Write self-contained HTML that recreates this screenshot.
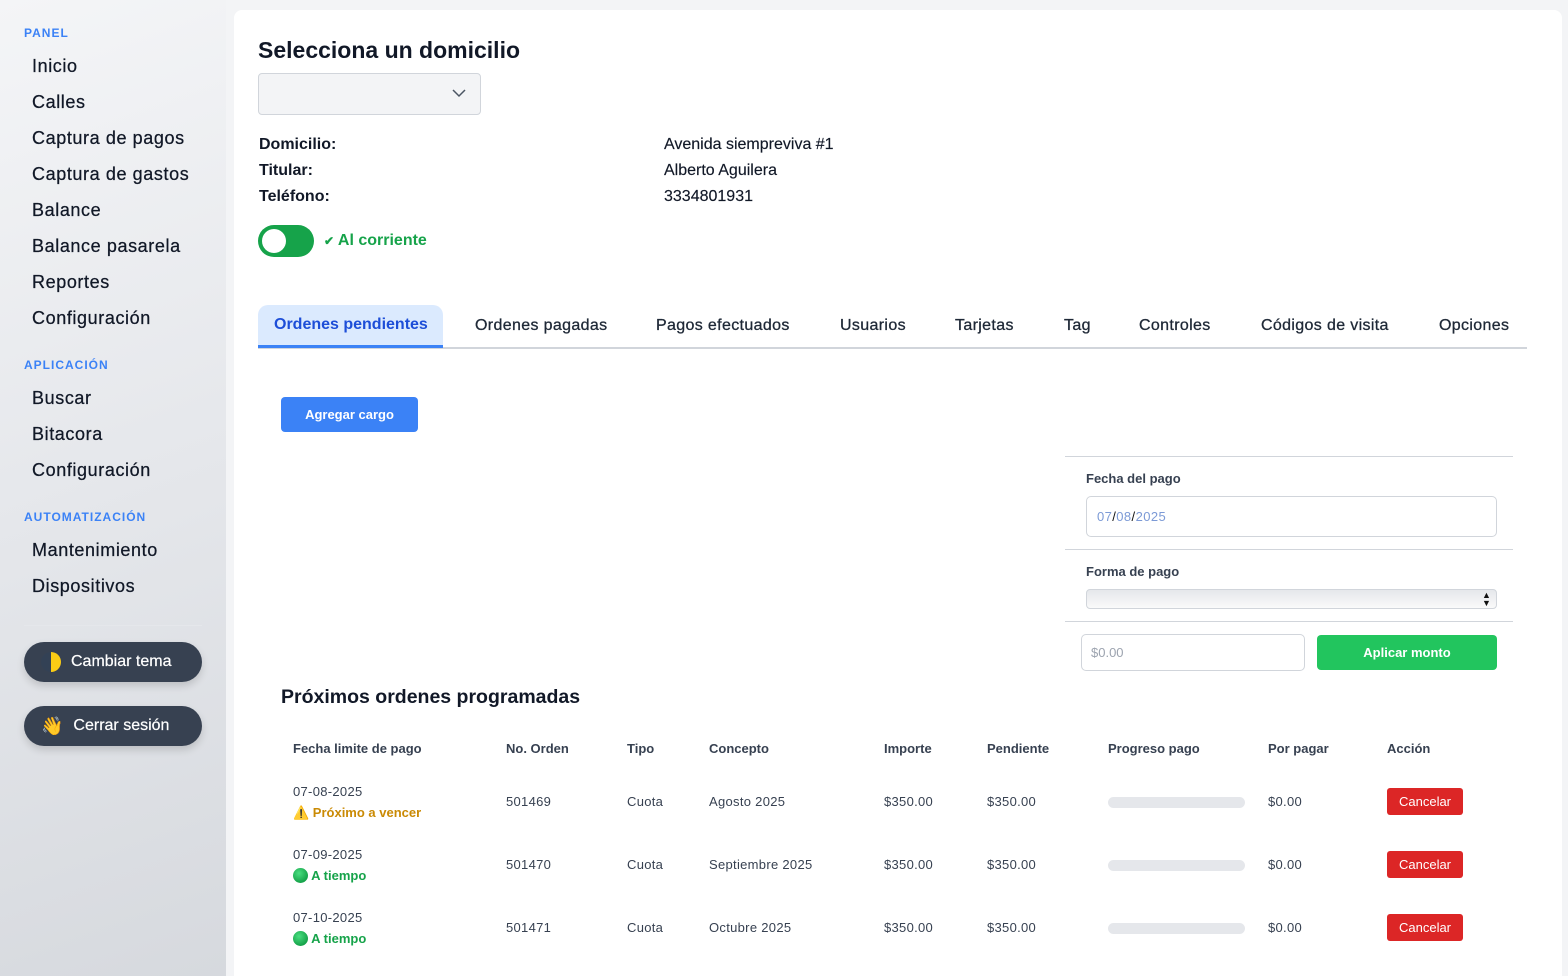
<!DOCTYPE html>
<html><head><meta charset="utf-8"><style>
*{box-sizing:border-box;margin:0;padding:0}
html,body{width:1568px;height:976px;overflow:hidden}
body{background:#f3f4f6;font-family:"Liberation Sans","Noto Sans CJK JP",sans-serif;color:#111827;position:relative}
.a{position:absolute;white-space:nowrap}
#side{position:absolute;left:0;top:0;width:226px;height:976px;background:linear-gradient(160deg,#f4f5f7 0%,#e5e7eb 50%,#d6d9de 100%)}
.sec{font-size:12px;color:#3b82f6;letter-spacing:1px;left:24px;font-weight:600}
.nav{font-size:18px;color:#111827;left:32px;letter-spacing:0.6px;-webkit-text-stroke:0.25px #111827}
.pill{position:absolute;left:24px;width:178px;height:40px;border-radius:20px;background:#374151;color:#fff;font-size:16px;box-shadow:0 4px 8px rgba(0,0,0,.15);display:flex;align-items:center;padding-left:17px;gap:10px;-webkit-text-stroke:0.2px #fff}
#main{position:absolute;left:234px;top:10px;width:1328px;height:966px;background:#fff;border-radius:8px 8px 0 0}
.lbl{font-size:16px;font-weight:bold;left:259px}
.val{font-size:16px;left:664px;-webkit-text-stroke:0.15px #111827}
.tab{font-size:16px;color:#1f2937;top:317px;letter-spacing:0.35px;-webkit-text-stroke:0.3px #1f2937}
.th{font-size:13px;font-weight:bold;color:#374151;top:741px}
.td{font-size:13px;color:#374151;letter-spacing:0.3px}
.bar{position:absolute;left:1108px;width:137px;height:11px;border-radius:6px;background:#e5e7eb}
.btn{position:absolute;left:1387px;width:76px;height:27px;background:#dc2626;color:#fff;border-radius:3px;font-size:13px;text-align:center;line-height:27px}
.hr{position:absolute;left:1065px;width:448px;height:1px;background:#d1d5db}
</style></head><body>
<div id="side">
<div class="a sec" style="top:26px">PANEL</div>
<div class="a nav" style="top:56px">Inicio</div>
<div class="a nav" style="top:92px">Calles</div>
<div class="a nav" style="top:128px">Captura de pagos</div>
<div class="a nav" style="top:164px">Captura de gastos</div>
<div class="a nav" style="top:200px">Balance</div>
<div class="a nav" style="top:236px">Balance pasarela</div>
<div class="a nav" style="top:272px">Reportes</div>
<div class="a nav" style="top:308px">Configuración</div>
<div class="a sec" style="top:358px">APLICACIÓN</div>
<div class="a nav" style="top:388px">Buscar</div>
<div class="a nav" style="top:424px">Bitacora</div>
<div class="a nav" style="top:460px">Configuración</div>
<div class="a sec" style="top:510px">AUTOMATIZACIÓN</div>
<div class="a nav" style="top:540px">Mantenimiento</div>
<div class="a nav" style="top:576px">Dispositivos</div>
<div class="a" style="left:24px;top:625px;width:178px;height:1px;background:#e5e7eb"></div>
<div class="pill" style="top:642px"><span style="width:20px;height:20px;border-radius:50%;background:linear-gradient(90deg,#334155 50%,#facc15 50%);display:inline-block"></span>Cambiar tema</div>
<div class="pill" style="top:706px"><span style="font-size:18px">👋</span>Cerrar sesión</div>
</div>
<div id="main"></div>
<div class="a" style="left:258px;top:37px;font-size:23px;font-weight:bold">Selecciona un domicilio</div>
<div class="a" style="left:258px;top:73px;width:223px;height:42px;border:1px solid #d1d5db;border-radius:4px;background:#f3f4f6"></div>
<svg class="a" style="left:451px;top:88px" width="16" height="10"><path d="M2 2l6 6 6-6" fill="none" stroke="#4b5563" stroke-width="1.5"/></svg>
<div class="a lbl" style="top:136px">Domicilio:</div>
<div class="a lbl" style="top:162px">Titular:</div>
<div class="a lbl" style="top:188px">Teléfono:</div>
<div class="a val" style="top:136px">Avenida siempreviva #1</div>
<div class="a val" style="top:162px">Alberto Aguilera</div>
<div class="a val" style="top:188px">3334801931</div>
<div class="a" style="left:258px;top:225px;width:56px;height:32px;border-radius:16px;background:#16a34a"></div>
<div class="a" style="left:262px;top:229px;width:24px;height:24px;border-radius:50%;background:#fff"></div>
<div class="a" style="left:324px;top:232px;font-size:16px;font-weight:bold;color:#16a34a"><span style="font-size:12px">✔</span> Al corriente</div>
<div class="a" style="left:258px;top:305px;width:185px;height:43px;background:#dbeafe;border-radius:10px 10px 0 0"></div>
<div class="a" style="left:258px;top:347px;width:1269px;height:2px;background:#d1d5db"></div>
<div class="a" style="left:258px;top:345px;width:185px;height:3px;background:#3b82f6"></div>
<div class="a tab" style="left:274px;top:316px;color:#1d4ed8;font-weight:600;letter-spacing:0;-webkit-text-stroke:0">Ordenes pendientes</div>
<div class="a tab" style="left:475px">Ordenes pagadas</div>
<div class="a tab" style="left:656px">Pagos efectuados</div>
<div class="a tab" style="left:840px">Usuarios</div>
<div class="a tab" style="left:955px">Tarjetas</div>
<div class="a tab" style="left:1064px">Tag</div>
<div class="a tab" style="left:1139px">Controles</div>
<div class="a tab" style="left:1261px">Códigos de visita</div>
<div class="a tab" style="left:1439px">Opciones</div>
<div class="a" style="left:281px;top:397px;width:137px;height:35px;background:#3b82f6;border-radius:4px;color:#fff;font-size:13px;font-weight:bold;text-align:center;line-height:35px">Agregar cargo</div>
<div class="hr" style="top:456px"></div>
<div class="a" style="left:1086px;top:471px;font-size:13px;font-weight:bold;color:#374151">Fecha del pago</div>
<div class="a" style="left:1086px;top:496px;width:411px;height:41px;border:1px solid #d1d5db;border-radius:5px;padding:12px 10px;font-size:13px;color:#7c9ad6;letter-spacing:0.4px">07<span style="color:#111">/</span>08<span style="color:#111">/</span>2025</div>
<div class="hr" style="top:549px"></div>
<div class="a" style="left:1086px;top:564px;font-size:13px;font-weight:bold;color:#374151">Forma de pago</div>
<div class="a" style="left:1086px;top:589px;width:411px;height:20px;border:1px solid #d1d5db;border-radius:4px;background:linear-gradient(#e5e7eb,#fafafa)"></div>
<div class="a" style="left:1482px;top:591px;font-size:9px;line-height:8px;color:#111">▲<br>▼</div>
<div class="hr" style="top:621px"></div>
<div class="a" style="left:1081px;top:634px;width:224px;height:37px;border:1px solid #d1d5db;border-radius:5px;padding:10px 9px;font-size:13px;color:#9ca3af">$0.00</div>
<div class="a" style="left:1317px;top:635px;width:180px;height:35px;background:#22c55e;border-radius:4px;color:#fff;font-size:13px;font-weight:bold;text-align:center;line-height:35px">Aplicar monto</div>
<div class="a" style="left:281px;top:686px;font-size:19.5px;font-weight:bold">Próximos ordenes programadas</div>
<div class="a th" style="left:293px">Fecha limite de pago</div>
<div class="a th" style="left:506px">No. Orden</div>
<div class="a th" style="left:627px">Tipo</div>
<div class="a th" style="left:709px">Concepto</div>
<div class="a th" style="left:884px">Importe</div>
<div class="a th" style="left:987px">Pendiente</div>
<div class="a th" style="left:1108px">Progreso pago</div>
<div class="a th" style="left:1268px">Por pagar</div>
<div class="a th" style="left:1387px">Acción</div>

<div class="a td" style="left:293px;top:784px">07-08-2025</div>
<div class="a td" style="left:293px;top:805px;color:#ca8a04;font-weight:600;letter-spacing:0">⚠️ Próximo a vencer</div>
<div class="a td" style="left:506px;top:794px">501469</div>
<div class="a td" style="left:627px;top:794px">Cuota</div>
<div class="a td" style="left:709px;top:794px">Agosto 2025</div>
<div class="a td" style="left:884px;top:794px">$350.00</div>
<div class="a td" style="left:987px;top:794px">$350.00</div>
<div class="bar" style="top:797px"></div>
<div class="a td" style="left:1268px;top:794px">$0.00</div>
<div class="btn" style="top:788px">Cancelar</div>

<div class="a td" style="left:293px;top:847px">07-09-2025</div>
<div class="a td" style="left:293px;top:868px;color:#16a34a;font-weight:600;letter-spacing:0"><span style="display:inline-block;width:15px;height:15px;border-radius:50%;background:radial-gradient(circle at 40% 35%,#4ade80,#16a34a 70%);vertical-align:-3px"></span> A tiempo</div>
<div class="a td" style="left:506px;top:857px">501470</div>
<div class="a td" style="left:627px;top:857px">Cuota</div>
<div class="a td" style="left:709px;top:857px">Septiembre 2025</div>
<div class="a td" style="left:884px;top:857px">$350.00</div>
<div class="a td" style="left:987px;top:857px">$350.00</div>
<div class="bar" style="top:860px"></div>
<div class="a td" style="left:1268px;top:857px">$0.00</div>
<div class="btn" style="top:851px">Cancelar</div>

<div class="a td" style="left:293px;top:910px">07-10-2025</div>
<div class="a td" style="left:293px;top:931px;color:#16a34a;font-weight:600;letter-spacing:0"><span style="display:inline-block;width:15px;height:15px;border-radius:50%;background:radial-gradient(circle at 40% 35%,#4ade80,#16a34a 70%);vertical-align:-3px"></span> A tiempo</div>
<div class="a td" style="left:506px;top:920px">501471</div>
<div class="a td" style="left:627px;top:920px">Cuota</div>
<div class="a td" style="left:709px;top:920px">Octubre 2025</div>
<div class="a td" style="left:884px;top:920px">$350.00</div>
<div class="a td" style="left:987px;top:920px">$350.00</div>
<div class="bar" style="top:923px"></div>
<div class="a td" style="left:1268px;top:920px">$0.00</div>
<div class="btn" style="top:914px">Cancelar</div>
</body></html>
